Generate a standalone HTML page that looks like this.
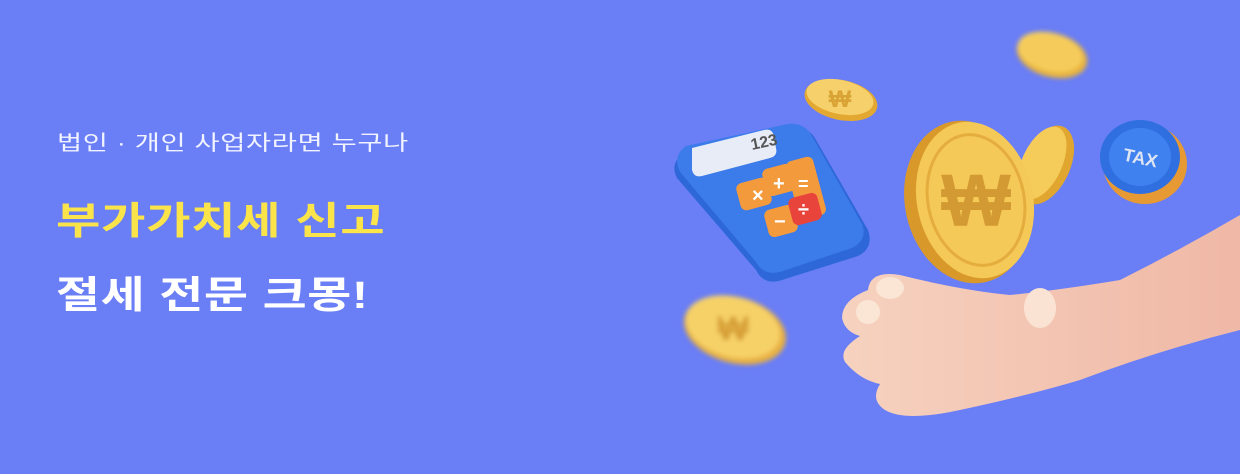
<!DOCTYPE html>
<html><head><meta charset="utf-8"><style>
html,body{margin:0;padding:0}
body{width:1240px;height:474px;background:#6a7ef6;position:relative;overflow:hidden;font-family:"Liberation Sans","Noto Sans CJK KR","NanumGothic",sans-serif}
.t1,.t2,.t3{position:absolute;white-space:nowrap;transform-origin:0 50%}
.t1{left:57px;top:127px;font-size:21px;color:#f1f3ff;letter-spacing:0.5px;transform:scaleX(1.3)}
.t2{left:56px;top:190px;font-size:38px;font-weight:700;color:#fbe34a;letter-spacing:0.5px;transform:scaleX(1.27)}
.t3{left:56px;top:264px;font-size:38px;font-weight:700;color:#fff;letter-spacing:0.5px;transform:scaleX(1.26)}
svg{position:absolute;left:0;top:0}
</style></head><body>
<div class="t1">법인 · 개인 사업자라면 누구나</div>
<div class="t2">부가가치세 신고</div>
<div class="t3">절세 전문 크몽!</div>
<svg width="1240" height="474" viewBox="0 0 1240 474">
<defs>
<filter id="b"><feGaussianBlur stdDeviation="2.5"/></filter>
<linearGradient id="arm" x1="0" y1="0" x2="1" y2="0"><stop offset="0" stop-color="#f6d2bf"/><stop offset="1" stop-color="#f0b8a6"/></linearGradient>
</defs>
<g filter="url(#b)">
<ellipse cx="1052" cy="55" rx="36" ry="22" transform="rotate(15 1052 55)" fill="#e9b43a"/>
<ellipse cx="1050" cy="52" rx="33" ry="19" transform="rotate(15 1050 52)" fill="#f5cc5c"/>
<ellipse cx="735" cy="330" rx="52" ry="33" transform="rotate(15 735 330)" fill="#e8b040"/>
<ellipse cx="733" cy="327" rx="48" ry="30" transform="rotate(15 733 327)" fill="#f6d167"/>
<text x="733" y="340" font-size="34" font-weight="700" fill="#d59c30" text-anchor="middle" font-family="Liberation Sans">₩</text>
</g>
<ellipse cx="841" cy="100" rx="37" ry="20" transform="rotate(12 841 100)" fill="#e3a832"/>
<ellipse cx="840" cy="97" rx="34" ry="17" transform="rotate(12 840 97)" fill="#f6d06a"/>
<text x="840" y="107" font-size="24" font-weight="700" fill="#d9a336" text-anchor="middle" font-family="Liberation Sans">₩</text>
<path d="M690 150 L790 128 Q808 125 816 140 L868 230 Q874 248 858 256 L782 280 Q764 286 756 270 L677 178 Q668 160 690 150Z" fill="#2d67d8"/>
<path d="M686 146 L788 124 Q804 122 812 136 L862 224 Q868 240 852 248 L780 272 Q764 276 756 262 L680 172 Q672 156 686 146Z" fill="#3b7bea"/>
<path d="M692 148 L764 130 Q772 128 774 136 L776 148 Q778 156 770 158 L702 176 Q694 178 692 170Z" fill="#e8ecf6"/>
<text x="752" y="150" font-size="16" font-weight="700" fill="#555" font-family="Liberation Sans" transform="rotate(-12 752 150)">123</text>
<rect x="738" y="180" width="32" height="28" rx="6" fill="#f39a3c" transform="rotate(-15 754 194)"/>
<rect x="764" y="166" width="30" height="28" rx="6" fill="#f39a3c" transform="rotate(-15 779 180)"/>
<rect x="792" y="158" width="28" height="60" rx="6" fill="#f39a3c" transform="rotate(-15 806 188)"/>
<rect x="766" y="207" width="30" height="28" rx="6" fill="#f39a3c" transform="rotate(-15 781 221)"/>
<rect x="790" y="195" width="30" height="28" rx="6" fill="#e8443c" transform="rotate(-15 805 209)"/>
<text x="752" y="202" font-size="20" font-weight="700" fill="#fff" font-family="Liberation Sans">×</text>
<text x="773" y="190" font-size="20" font-weight="700" fill="#fff" font-family="Liberation Sans">+</text>
<text x="798" y="190" font-size="18" font-weight="700" fill="#fff" font-family="Liberation Sans">=</text>
<text x="774" y="228" font-size="20" font-weight="700" fill="#fff" font-family="Liberation Sans">−</text>
<text x="798" y="216" font-size="20" font-weight="700" fill="#fff" font-family="Liberation Sans">÷</text>
<ellipse cx="1046" cy="165" rx="24" ry="42" transform="rotate(25 1046 165)" fill="#e0a630"/>
<ellipse cx="1042" cy="163" rx="20" ry="39" transform="rotate(25 1042 163)" fill="#f5cc5a"/>
<ellipse cx="968" cy="202" rx="63" ry="82" transform="rotate(-12 968 202)" fill="#d9992a"/>
<ellipse cx="975" cy="200" rx="58" ry="79" transform="rotate(-12 975 200)" fill="#f4c957"/>
<ellipse cx="976" cy="200" rx="48" ry="66" transform="rotate(-12 976 200)" fill="none" stroke="#e5ad3d" stroke-width="3"/>
<text x="976" y="226" font-size="74" font-weight="700" fill="#d39a33" text-anchor="middle" font-family="Liberation Sans">₩</text>
<ellipse cx="1145" cy="164" rx="42" ry="40" fill="#e79a33"/>
<ellipse cx="1140" cy="157" rx="40" ry="37" fill="#2f6fe0"/>
<ellipse cx="1140" cy="157" rx="31" ry="29" fill="#3f82ef"/>
<text x="1140" y="164" font-size="18" font-weight="700" fill="#dde5f5" text-anchor="middle" font-family="Liberation Sans" transform="rotate(12 1140 160)">TAX</text>
<path d="M1240 215 Q1180 250 1120 280 Q1060 290 1010 295 Q960 290 900 275 Q870 270 868 290 Q842 300 842 318 Q845 332 860 336 Q838 350 845 362 Q860 380 880 384 Q870 400 885 410 Q905 422 960 410 Q1030 395 1080 380 Q1160 350 1240 330Z" fill="url(#arm)"/>
<ellipse cx="1040" cy="308" rx="16" ry="20" fill="#fbe3d4"/>
<ellipse cx="868" cy="312" rx="12" ry="12" fill="#fbe6d6"/>
<ellipse cx="890" cy="288" rx="14" ry="11" fill="#fbe6d6"/>
</svg>
</body></html>
